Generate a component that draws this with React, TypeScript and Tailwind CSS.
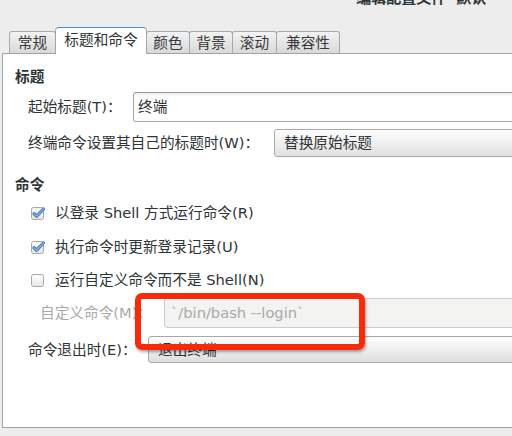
import React from "react";

const tabs = [
  { label: "常规", w: "w-[47px]" },
  { label: "标题和命令", w: "w-[92px]", active: true },
  { label: "颜色", w: "w-[44px]" },
  { label: "背景", w: "w-[44px]" },
  { label: "滚动", w: "w-[45px]" },
  { label: "兼容性", w: "w-[64px]" },
];

function CheckBox({ checked }: { checked?: boolean }) {
  return (
    <svg width="16" height="16" viewBox="0 0 16 16" className="shrink-0">
      <defs>
        <linearGradient id="cbg" x1="0" y1="0" x2="0" y2="1">
          <stop offset="0" stopColor="#ffffff" />
          <stop offset="1" stopColor="#e6e6e6" />
        </linearGradient>
      </defs>
      <rect x="1.5" y="2.5" width="12" height="12" rx="2" fill="url(#cbg)" stroke="#a8a8a8" />
      {checked && (
        <>
          <path d="M4 8.8 L6.7 11.2 L13.4 4" fill="none" stroke="#3d6ea8" strokeWidth="3.2" strokeLinecap="round" strokeLinejoin="round" />
          <path d="M4 8.8 L6.7 11.2 L13.4 4" fill="none" stroke="#79aee8" strokeWidth="1.7" strokeLinecap="round" strokeLinejoin="round" />
        </>
      )}
    </svg>
  );
}

function CheckRow({ label, checked, className }: { label: string; checked?: boolean; className?: string }) {
  return (
    <div className={"flex h-[24px] items-center pl-[27px] " + (className ?? "")}>
      <CheckBox checked={checked} />
      <span className="ml-[9px]">{label}</span>
    </div>
  );
}

export default function App() {
  return (
    <div
      className="relative h-[436px] w-[512px] overflow-hidden bg-[#ededed] text-[14.67px] text-[#2e3436]"
      style={{ fontFamily: '"DejaVu Sans", "Noto Sans CJK SC", sans-serif' }}
    >
      {/* window title, only its lower edge shows */}
      <div className="flex h-[6px] items-end justify-end overflow-hidden pr-[16px]">
        <span className="shrink-0 text-[15px] leading-[15px] font-bold text-[#2e3436]">编辑配置文件“默认”</span>
      </div>

      {/* tabs */}
      <div className="mt-[21px] flex h-[26px] items-end pl-[10px]">
        {tabs.map((t) =>
          t.active ? (
            <div
              key={t.label}
              className={
                t.w +
                " relative z-10 -ml-px flex h-[27px] translate-y-px items-center justify-center rounded-t-[4px] border border-b-0 border-[#a3a3a3] border-t-[#4a90d9] bg-white pb-[2px]"
              }
            >
              {t.label}
            </div>
          ) : (
            <div
              key={t.label}
              className={
                t.w +
                " -ml-px flex h-[22px] items-center justify-center rounded-t-[3px] border border-b-0 border-[#a8a8a8] bg-linear-to-b from-[#f3f3f3] to-[#d9d9d9] pt-px text-[#3a3a3a]"
              }
            >
              {t.label}
            </div>
          )
        )}
      </div>

      {/* panel */}
      <div className="ml-[2px] flex h-[375px] w-[540px] flex-col border border-[#a3a3a3] bg-white">
        <div className="mt-[12px] flex h-[22px] items-center pl-[12px] font-bold">标题</div>

        <div className="mt-[4px] flex h-[30px] items-center pl-[25px]">
          <span className="w-[105px] shrink-0">起始标题(T)：</span>
          <div className="flex h-[30px] flex-1 items-center rounded-l-[3px] border border-[#a8a8a8] border-t-[#949494] bg-white pl-[4px] shadow-[inset_0_2px_3px_rgba(0,0,0,0.07)]">
            终端
          </div>
        </div>

        <div className="mt-[7px] flex h-[28px] items-center pl-[25px]">
          <span className="w-[246px] shrink-0">终端命令设置其自己的标题时(W)：</span>
          <div className="flex h-[28px] flex-1 items-center rounded-l-[3px] border border-[#a8a8a8] bg-linear-to-b from-white to-[#e0e0e0] pl-[9px]">
            替换原始标题
          </div>
        </div>

        <div className="mt-[17px] flex h-[22px] items-center pl-[12px] font-bold">命令</div>

        <CheckRow className="mt-[5px]" checked label="以登录 Shell 方式运行命令(R)" />
        <CheckRow className="mt-[10px]" checked label="执行命令时更新登录记录(U)" />
        <CheckRow className="mt-[9px]" label="运行自定义命令而不是 Shell(N)" />

        <div className="mt-[6px] flex h-[30px] items-center pl-[37px] text-[#a9a9a9]">
          <span className="w-[124px] shrink-0">自定义命令(M)：</span>
          <div className="flex h-[30px] flex-1 items-center rounded-l-[3px] border border-[#cdcdcd] bg-[#f3f3f1] pl-[6px]">
            `/bin/bash --login`
          </div>
        </div>

        <div className="mt-[8px] flex h-[27px] items-center pl-[25px]">
          <span className="w-[120px] shrink-0">命令退出时(E)：</span>
          <div className="flex h-[27px] flex-1 items-center rounded-l-[3px] border border-[#a8a8a8] bg-linear-to-b from-white to-[#dedede] pl-[9px]">
            退出终端
          </div>
        </div>
      </div>

      {/* red highlight annotation */}
      <div className="absolute left-[135px] top-[293px] h-[57px] w-[230px] rounded-[7px] border-[6px] border-[#f52b0c] shadow-[1px_2px_3px_rgba(0,0,0,0.35)]" />
    </div>
  );
}
